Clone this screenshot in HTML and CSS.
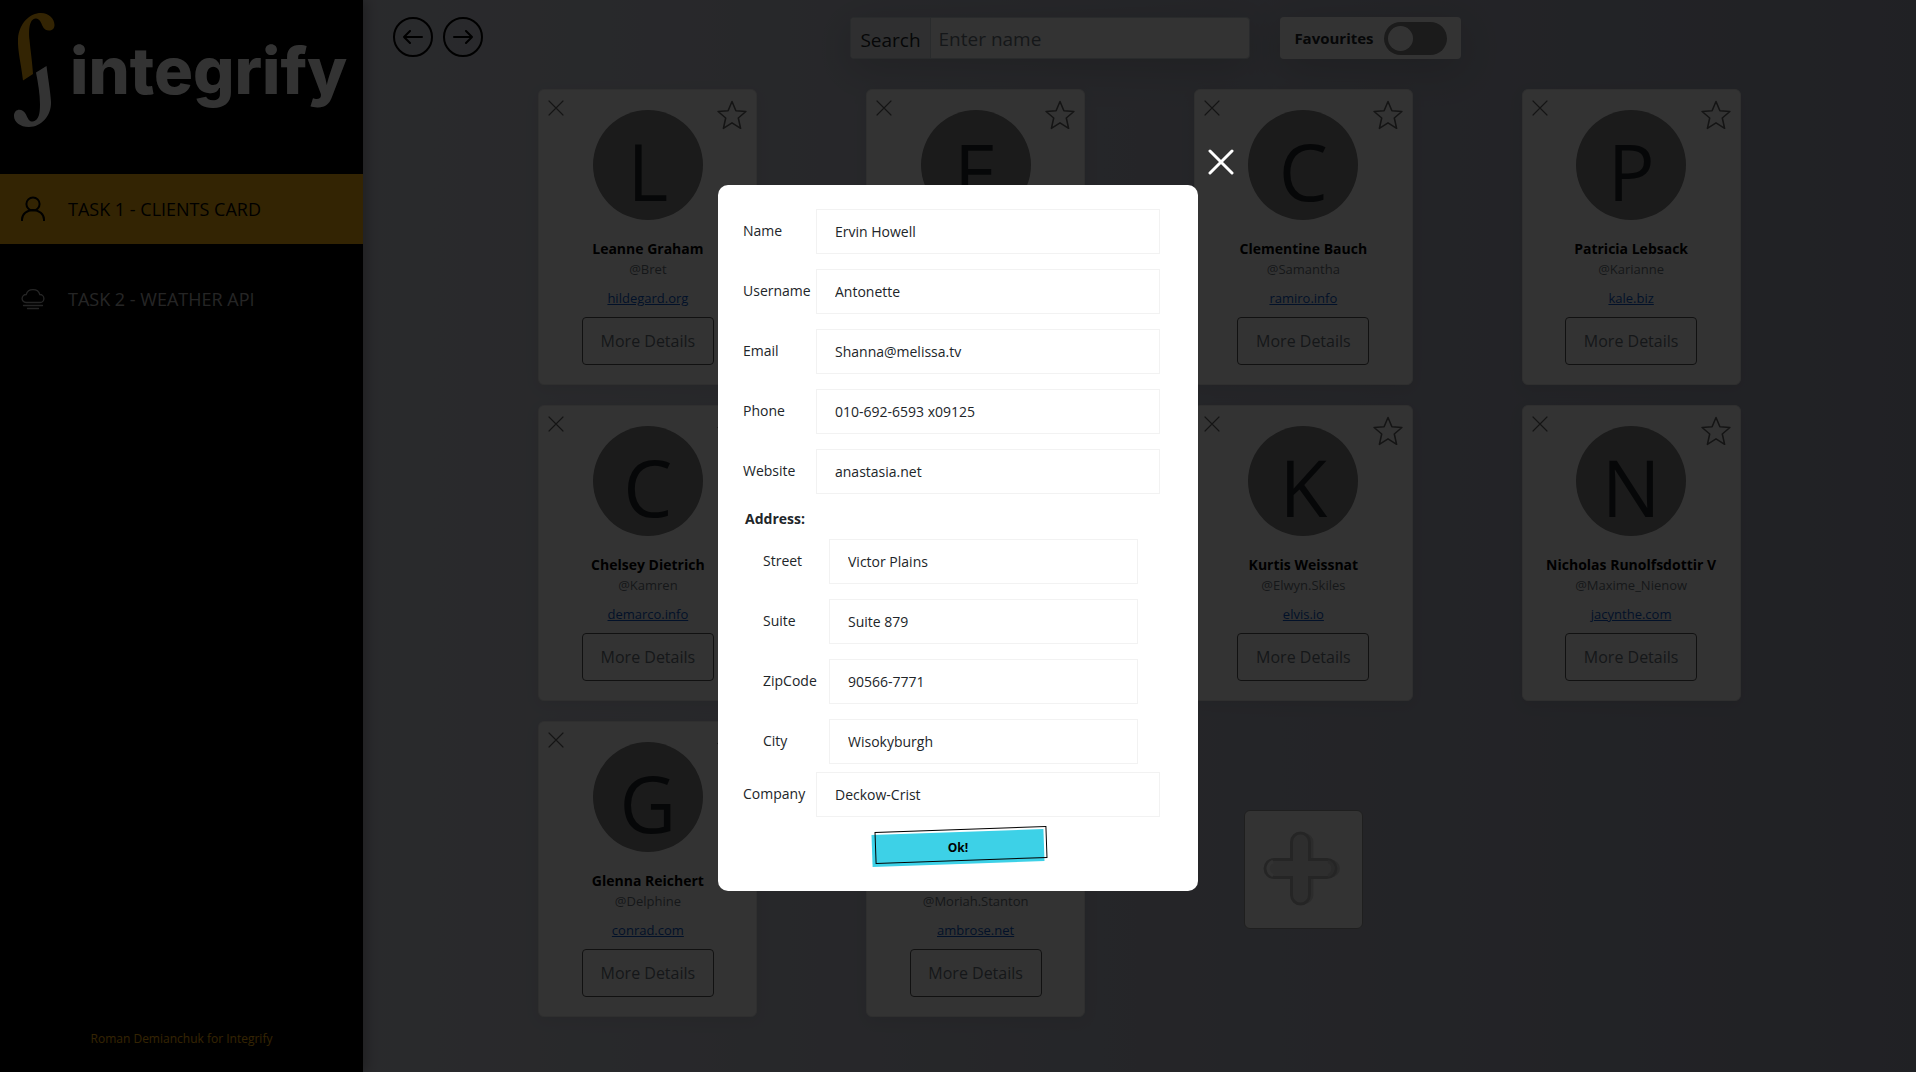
FILE: index.html
```html
<!DOCTYPE html>
<html lang="en">
<head>
<meta charset="utf-8">
<meta name="viewport" content="width=device-width, initial-scale=1">
<title>Integrify - Clients Card</title>
<link rel="stylesheet" href="styles.css">
</head>
<body>
<svg class="sprite" aria-hidden="true">
  <symbol id="i-x" viewBox="0 0 16 16"><path d="M1 1l14 14M15 1L1 15" fill="none" stroke="currentColor" stroke-width="1.2" stroke-linecap="round"/></symbol>
  <symbol id="i-star" viewBox="0 0 30 30"><path d="M15 1.5l3.9 9.2 10 .8-7.6 6.5 2.3 10.3L15 22.8l-8.6 5.5L8.700 18 1.100 11.500l10-.8z" fill="none" stroke="currentColor" stroke-width="1.600" stroke-linejoin="round"/></symbol>
</svg>
<div class="app">
  <aside class="sidebar">
    <a class="logo" href="#" aria-label="integrify">
      <svg class="logo-mark" viewBox="0 0 44 117" aria-hidden="true">
        <path fill="#ffb40f" d="M9 67.500C7 50 3.500 38 4 26 5 10 16 0 27 0c8 0 13.500 6 13.500 12 0 7-9.500 7.500-12 1C27 9 25 5 21.500 5.500 15 6 14.500 18 15.500 27c1 10 3 24 3.500 34z"/>
        <path fill="#fff" d="M32.500 53c1.500 12 4 26 4.500 36 .5 14-10 25-22 25-9 0-15-5-15-11 0-8 9-8 12-1.500 2 4 3 7.500 7 7 6-1 7-9 7-17 0-10-2-22-4-32z"/>
      </svg>
      <span class="logo-text">integrify</span>
    </a>
    <nav class="nav">
      <a class="nav-link active" href="#">
        <svg width="26" height="26" viewBox="0 0 26 26" fill="none" stroke="currentColor" stroke-width="2" aria-hidden="true"><circle cx="13" cy="8" r="6.600"/><path d="M2 25v-1.500a11 9.500 0 0 1 22 0V25"/></svg>
        <span>TASK 1 - CLIENTS CARD</span>
      </a>
      <a class="nav-link" href="#">
        <svg width="26" height="26" viewBox="0 0 26 26" fill="none" stroke="currentColor" stroke-width="1.300" stroke-linecap="round" aria-hidden="true"><path d="M6 16.500a4 4 0 0 1 .2-8A7 6.500 0 0 1 19.800 8.500a4 4 0 0 1 .2 8zM3.500 19.500h19M7.500 22.500h11"/></svg>
        <span>TASK 2 - WEATHER API</span>
      </a>
    </nav>
    <p class="credit">Roman Demianchuk for Integrify</p>
  </aside>

  <main class="content">
    <header class="toolbar">
      <div class="history">
        <button class="round" type="button" aria-label="Back"><svg width="20" height="14" viewBox="0 0 20 14"><path d="M19 7H1m6-6L1 7l6 6"/></svg></button>
        <button class="round" type="button" aria-label="Forward"><svg width="20" height="14" viewBox="0 0 20 14"><path d="M1 7h18m-6-6l6 6-6 6"/></svg></button>
      </div>
      <div class="filters">
        <div class="search">
          <label for="search">Search</label>
          <input id="search" type="text" placeholder="Enter name">
        </div>
        <div class="favourites">
          <label for="fav">Favourites</label>
          <input id="fav" type="checkbox" role="switch">
        </div>
      </div>
    </header>

    <section class="cards">
      <article class="card">
        <button class="remove" type="button" aria-label="Remove"><svg><use href="#i-x"/></svg></button>
        <button class="star" type="button" aria-label="Add to favourites"><svg><use href="#i-star"/></svg></button>
        <div class="avatar">L</div><h2>Leanne Graham</h2><p>@Bret</p><a href="#">hildegard.org</a>
        <button class="details" type="button">More Details</button>
      </article>
      <article class="card">
        <button class="remove" type="button" aria-label="Remove"><svg><use href="#i-x"/></svg></button>
        <button class="star" type="button" aria-label="Add to favourites"><svg><use href="#i-star"/></svg></button>
        <div class="avatar">E</div><h2>Ervin Howell</h2><p>@Antonette</p><a href="#">anastasia.net</a>
        <button class="details" type="button">More Details</button>
      </article>
      <article class="card">
        <button class="remove" type="button" aria-label="Remove"><svg><use href="#i-x"/></svg></button>
        <button class="star" type="button" aria-label="Add to favourites"><svg><use href="#i-star"/></svg></button>
        <div class="avatar">C</div><h2>Clementine Bauch</h2><p>@Samantha</p><a href="#">ramiro.info</a>
        <button class="details" type="button">More Details</button>
      </article>
      <article class="card">
        <button class="remove" type="button" aria-label="Remove"><svg><use href="#i-x"/></svg></button>
        <button class="star" type="button" aria-label="Add to favourites"><svg><use href="#i-star"/></svg></button>
        <div class="avatar">P</div><h2>Patricia Lebsack</h2><p>@Karianne</p><a href="#">kale.biz</a>
        <button class="details" type="button">More Details</button>
      </article>
      <article class="card">
        <button class="remove" type="button" aria-label="Remove"><svg><use href="#i-x"/></svg></button>
        <button class="star" type="button" aria-label="Add to favourites"><svg><use href="#i-star"/></svg></button>
        <div class="avatar">C</div><h2>Chelsey Dietrich</h2><p>@Kamren</p><a href="#">demarco.info</a>
        <button class="details" type="button">More Details</button>
      </article>
      <article class="card">
        <button class="remove" type="button" aria-label="Remove"><svg><use href="#i-x"/></svg></button>
        <button class="star" type="button" aria-label="Add to favourites"><svg><use href="#i-star"/></svg></button>
        <div class="avatar">M</div><h2>Mrs. Dennis Schulist</h2><p>@Leopoldo_Corkery</p><a href="#">ola.org</a>
        <button class="details" type="button">More Details</button>
      </article>
      <article class="card">
        <button class="remove" type="button" aria-label="Remove"><svg><use href="#i-x"/></svg></button>
        <button class="star" type="button" aria-label="Add to favourites"><svg><use href="#i-star"/></svg></button>
        <div class="avatar">K</div><h2>Kurtis Weissnat</h2><p>@Elwyn.Skiles</p><a href="#">elvis.io</a>
        <button class="details" type="button">More Details</button>
      </article>
      <article class="card">
        <button class="remove" type="button" aria-label="Remove"><svg><use href="#i-x"/></svg></button>
        <button class="star" type="button" aria-label="Add to favourites"><svg><use href="#i-star"/></svg></button>
        <div class="avatar">N</div><h2>Nicholas Runolfsdottir V</h2><p>@Maxime_Nienow</p><a href="#">jacynthe.com</a>
        <button class="details" type="button">More Details</button>
      </article>
      <article class="card">
        <button class="remove" type="button" aria-label="Remove"><svg><use href="#i-x"/></svg></button>
        <button class="star" type="button" aria-label="Add to favourites"><svg><use href="#i-star"/></svg></button>
        <div class="avatar">G</div><h2>Glenna Reichert</h2><p>@Delphine</p><a href="#">conrad.com</a>
        <button class="details" type="button">More Details</button>
      </article>
      <article class="card">
        <button class="remove" type="button" aria-label="Remove"><svg><use href="#i-x"/></svg></button>
        <button class="star" type="button" aria-label="Add to favourites"><svg><use href="#i-star"/></svg></button>
        <div class="avatar">C</div><h2>Clementina DuBuque</h2><p>@Moriah.Stanton</p><a href="#">ambrose.net</a>
        <button class="details" type="button">More Details</button>
      </article>
      <button class="add" type="button" aria-label="Add client">
        <svg width="80" height="76" viewBox="0 0 80 76" aria-hidden="true">
          <path fill="#dcdcdc" transform="translate(4 0)" d="M28.500 28.500V11a9 9 0 0 1 18 0v17.500H64a9 9 0 0 1 0 18H46.500V64a9 9 0 0 1-18 0V46.500H11a9 9 0 0 1 0-18z"/>
          <path fill="#e6e6e6" stroke="#b9b9b9" stroke-width="3" d="M28.500 28.500V11a9 9 0 0 1 18 0v17.500H64a9 9 0 0 1 0 18H46.500V64a9 9 0 0 1-18 0V46.500H11a9 9 0 0 1 0-18z"/>
          <path fill="none" stroke="#f8f8f8" stroke-width="3" d="M10 30.500a7.500 7.500 0 0 0 0 14"/>
          <path fill="none" stroke="#cfcfcf" stroke-width="3" d="M65 30.500a7.500 7.500 0 0 1 0 14"/>
        </svg>
      </button>
    </section>
  </main>
</div>

<div class="overlay">
  <div class="modal" role="dialog" aria-modal="true" aria-label="Client details">
    <button class="close" type="button" aria-label="Close"><svg width="26" height="26" viewBox="0 0 26 26"><path d="M2 2l22 22M24 2L2 24" fill="none" stroke="currentColor" stroke-width="3" stroke-linecap="round"/></svg></button>
    <form class="form">
      <div class="fields">
        <div class="field"><label for="name">Name</label><input id="name" type="text" value="Ervin Howell"></div>
        <div class="field"><label for="username">Username</label><input id="username" type="text" value="Antonette"></div>
        <div class="field"><label for="email">Email</label><input id="email" type="text" value="Shanna@melissa.tv"></div>
        <div class="field"><label for="phone">Phone</label><input id="phone" type="text" value="010-692-6593 x09125"></div>
        <div class="field"><label for="website">Website</label><input id="website" type="text" value="anastasia.net"></div>
      </div>
      <h3>Address:</h3>
      <div class="fields address">
        <div class="field"><label for="street">Street</label><input id="street" type="text" value="Victor Plains"></div>
        <div class="field"><label for="suite">Suite</label><input id="suite" type="text" value="Suite 879"></div>
        <div class="field"><label for="zip">ZipCode</label><input id="zip" type="text" value="90566-7771"></div>
        <div class="field"><label for="city">City</label><input id="city" type="text" value="Wisokyburgh"></div>
      </div>
      <div class="field"><label for="company">Company</label><input id="company" type="text" value="Deckow-Crist"></div>
      <button class="ok" type="button"><span>Ok!</span></button>
    </form>
  </div>
</div>
</body>
</html>
```
FILE: styles.css
```css
* { box-sizing: border-box; }
body {
  margin: 0;
  font-family: "Open Sans", "Noto Sans", sans-serif;
  font-size: 14px;
  line-height: 20px;
  color: #212529;
}
button, input { font: inherit; color: inherit; }
button { padding: 0; border: 0; background: none; }
h2, h3, p { margin: 0; }
.sprite { display: none; }

.app { display: flex; min-height: 100vh; }

/* Sidebar */
.sidebar {
  position: relative;
  flex: 0 0 363px;
  display: flex;
  flex-direction: column;
  background: #000;
  box-shadow: 4px 0 12px rgba(0, 0, 0, .25);
}
.logo {
  display: flex;
  gap: 12px;
  height: 174px;
  padding: 13px 0 0 14px;
  color: #fff;
  text-decoration: none;
}
.logo-mark { width: 44px; height: 117px; }
.logo-text { font: 800 65px/116px Inter, sans-serif; }
.nav { display: grid; gap: 20px; }
.nav-link {
  display: flex;
  align-items: center;
  gap: 22px;
  height: 70px;
  padding-left: 20px;
  font-size: 18px;
  color: #bbb;
  text-decoration: none;
}
.nav-link.active { background: #ffb40f; color: #000; }
.credit {
  margin: auto 0 23px;
  text-align: center;
  font-size: 12px;
  color: #ffb40f;
}

/* Content */
.content {
  flex: 1;
  background: linear-gradient(90deg, #cfd1dc, #a2a5b6);
}
.toolbar {
  display: flex;
  padding: 17px 88px 0 30px;
}
.history { display: flex; gap: 10px; }
.round {
  display: grid;
  place-items: center;
  width: 40px;
  height: 40px;
  border: 2px solid #000;
  border-radius: 50%;
}
.round path {
  fill: none;
  stroke: #000;
  stroke-width: 2;
  stroke-linecap: round;
  stroke-linejoin: round;
}
.filters {
  flex: 1;
  display: flex;
  justify-content: center;
  gap: 30px;
}
.search {
  display: flex;
  width: 400px;
  height: 42px;
  border: 1px solid #ced4da;
  border-radius: 4px;
  background: #fff;
  overflow: hidden;
  font-size: 19px;
  line-height: 40px;
}
.search, .favourites { box-shadow: 0 10px 40px rgba(0, 0, 0, .15); }
.search label {
  padding: 2px 9px 0;
  border-right: 1px solid #ced4da;
  background: #e9ecef;
}
.search input {
  flex: 1;
  min-width: 0;
  padding: 2px 8px 0;
  border: 0;
  background: none;
}
.search input::placeholder { color: #6c757d; opacity: 1; }
.favourites {
  display: flex;
  align-items: center;
  gap: 10px;
  height: 42px;
  padding: 0 14px;
  border-radius: 4px;
  background: #fff;
  font-size: 15px;
  font-weight: 700;
}
.favourites input {
  appearance: none;
  width: 63px;
  height: 33px;
  margin: 0;
  padding: 4px;
  border-radius: 17px;
  background: #868686;
}
.favourites input::before {
  content: "";
  display: block;
  width: 25px;
  height: 25px;
  border-radius: 50%;
  background: #fff;
}

.cards {
  display: grid;
  grid-template-columns: repeat(4, 1fr);
  gap: 20px 0;
  place-items: center;
  max-width: 1311px;
  margin: 30px auto 50px;
}
.card {
  position: relative;
  display: flex;
  flex-direction: column;
  align-items: center;
  width: 219px;
  padding: 20px 0 19px;
  border: 1px solid #e8e8e8;
  border-radius: 6px;
  background: #fff;
  box-shadow: 0 4px 16px rgba(0, 0, 0, .06);
}
.remove, .star { position: absolute; color: #666; }
.remove { top: 10px; left: 9px; width: 16px; height: 16px; }
.star { top: 10px; right: 9px; width: 30px; height: 30px; }
.remove svg, .star svg { display: block; width: 100%; height: 100%; }
.avatar {
  width: 110px;
  height: 110px;
  margin-bottom: 19px;
  border-radius: 50%;
  background: #868686;
  font-size: 78px;
  line-height: 122px;
  text-align: center;
}
.card h2 { font-size: 14px; line-height: 20px; color: #000; }
.card p { font-size: 13px; line-height: 20px; color: #6c757d; }
.card a { margin: 9px 0; font-size: 13px; line-height: 20px; color: #0a58ca; }
.details {
  width: 132px;
  height: 48px;
  border: 1px solid #555;
  border-radius: 4px;
  font-size: 16px;
  color: #6c757d;
}
.add {
  display: grid;
  place-items: center;
  width: 119px;
  height: 119px;
  border: 1px solid #999;
  border-radius: 6px;
  background: #fff;
}

/* Client dialog */
.overlay {
  position: fixed;
  inset: 0;
  display: flex;
  align-items: center;
  justify-content: center;
  padding-top: 3px;
  background: rgba(0, 0, 0, .8);
}
.modal {
  position: relative;
  width: 480px;
  padding: 24px 38px 27px 25px;
  border-radius: 10px;
  background: #fff;
}
.close { position: absolute; top: -36px; right: -36px; color: #fff; }
.close svg { display: block; }
.form { display: flex; flex-direction: column; }
.fields { display: grid; gap: 15px; }
.field { display: flex; align-items: center; }
.field label { flex: 0 0 73px; }
.field input {
  flex: 1;
  min-width: 0;
  height: 45px;
  padding: 0 18px;
  border: 1px solid #f2f2f2;
  background: #fff;
}
.form h3 { margin: 15px 2px 10px; font-size: 14px; line-height: 20px; }
.address { margin: 0 22px 8px 20px; }
.address label { flex-basis: 66px; }
.ok {
  position: relative;
  align-self: center;
  width: 172px;
  height: 32px;
  margin: 15px 0 0 13px;
  font-size: 12px;
  font-weight: 700;
  color: #000;
}
.ok::before, .ok::after {
  content: "";
  position: absolute;
  inset: 0;
  transform: rotate(-2deg);
}
.ok::before { background: #3dd1e7; }
.ok::after { inset: -3px -3px 3px 3px; border: 1px solid #000; }
.ok span { position: relative; }
```
